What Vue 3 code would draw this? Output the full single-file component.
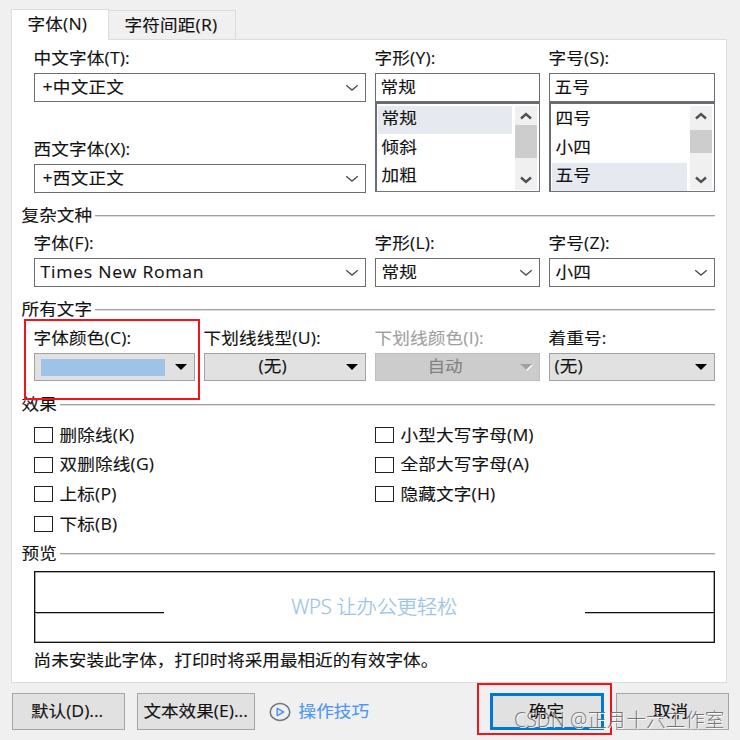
<script setup>
import { h } from 'vue'

const T = (props, { slots }) => h('span', { class: 'txt' }, slots.default())

const Chevron = () =>
  h('svg', { class: 'chev', width: 14, height: 8, viewBox: '0 0 14 8' }, [
    h('path', { d: 'M1.2 1.2 7 6.1l5.8-4.9', fill: 'none', stroke: '#505050', 'stroke-width': 1.4 })
  ])

const styles = [
  { name: '常规', on: true },
  { name: '倾斜', on: false },
  { name: '加粗', on: false }
]
const sizes = [
  { name: '四号', on: false },
  { name: '小四', on: false },
  { name: '五号', on: true }
]
const effectsLeft = ['删除线(K)', '双删除线(G)', '上标(P)', '下标(B)']
const effectsRight = ['小型大写字母(M)', '全部大写字母(A)', '隐藏文字(H)']
</script>

<template>
  <div class="dialog" lang="zh-CN">
    <nav class="tabs">
      <div class="tab active"><T>字体(N)</T></div>
      <div class="tab"><T>字符间距(R)</T></div>
    </nav>

    <main class="panel">
      <section class="fonts">
        <div class="col wide">
          <div class="field">
            <label><T>中文字体(T):</T></label>
            <div class="combo plus"><T>+中文正文</T><Chevron /></div>
          </div>
          <div class="field">
            <label><T>西文字体(X):</T></label>
            <div class="combo plus"><T>+西文正文</T><Chevron /></div>
          </div>
        </div>
        <div class="col">
          <label><T>字形(Y):</T></label>
          <div class="combo size"><T>常规</T></div>
          <div class="list">
            <ul>
              <li v-for="s in styles" :key="s.name" :class="{ on: s.on }"><T>{{ s.name }}</T></li>
            </ul>
            <div class="scroll">
              <svg width="12" height="8" viewBox="0 0 12 8"><path d="M1 6.5 6 2l5 4.5" /></svg>
              <i class="thumb first"></i>
              <svg class="down" width="12" height="8" viewBox="0 0 12 8"><path d="M1 1.5 6 6l5-4.5" /></svg>
            </div>
          </div>
        </div>
        <div class="col">
          <label><T>字号(S):</T></label>
          <div class="combo size"><T>五号</T></div>
          <div class="list">
            <ul>
              <li v-for="s in sizes" :key="s.name" :class="{ on: s.on }"><T>{{ s.name }}</T></li>
            </ul>
            <div class="scroll">
              <svg width="12" height="8" viewBox="0 0 12 8"><path d="M1 6.5 6 2l5 4.5" /></svg>
              <i class="thumb second"></i>
              <svg class="down" width="12" height="8" viewBox="0 0 12 8"><path d="M1 1.5 6 6l5-4.5" /></svg>
            </div>
          </div>
        </div>
      </section>

      <h2 class="complex"><T>复杂文种</T></h2>
      <section class="row">
        <div class="wide">
          <label><T>字体(F):</T></label>
          <div class="combo latin"><T>Times New Roman</T><Chevron /></div>
        </div>
        <div>
          <label><T>字形(L):</T></label>
          <div class="combo"><T>常规</T><Chevron /></div>
        </div>
        <div>
          <label><T>字号(Z):</T></label>
          <div class="combo"><T>小四</T><Chevron /></div>
        </div>
      </section>

      <h2><T>所有文字</T></h2>
      <section class="row">
        <div>
          <label><T>字体颜色(C):</T></label>
          <div class="drop"><span class="swatch"></span><i class="tri"></i></div>
        </div>
        <div>
          <label><T>下划线线型(U):</T></label>
          <div class="drop"><span class="mid"><T>(无)</T></span><i class="tri"></i></div>
        </div>
        <div class="disabled">
          <label><T>下划线颜色(I):</T></label>
          <div class="drop"><span class="mid"><T>自动</T></span><i class="tri"></i></div>
        </div>
        <div>
          <label><T>着重号:</T></label>
          <div class="drop"><T>(无)</T><i class="tri"></i></div>
        </div>
      </section>

      <h2 class="fx"><T>效果</T></h2>
      <section class="checks">
        <div>
          <div v-for="e in effectsLeft" :key="e" class="check"><i></i><T>{{ e }}</T></div>
        </div>
        <div>
          <div v-for="e in effectsRight" :key="e" class="check"><i></i><T>{{ e }}</T></div>
        </div>
      </section>

      <h2 class="pv"><T>预览</T></h2>
      <div class="preview">
        <i class="rule"></i>
        <span class="sample">WPS 让办公更轻松</span>
        <i class="rule"></i>
      </div>
      <p class="note"><T>尚未安装此字体，打印时将采用最相近的有效字体。</T></p>
    </main>

    <footer>
      <div class="btn b1"><T>默认(D)...</T></div>
      <div class="btn b2"><T>文本效果(E)...</T></div>
      <div class="tips">
        <svg width="22" height="20" viewBox="0 0 22 20">
          <ellipse cx="11" cy="10" rx="9.8" ry="8.4" fill="none" stroke="#6e7478" stroke-width="1.5" />
          <path d="M8.2 6.3v7.4L14.6 10z" fill="none" stroke="#4c96f5" stroke-width="1.5" stroke-linejoin="round" />
        </svg>
        <T>操作技巧</T>
      </div>
      <div class="btn ok"><T>确定</T></div>
      <div class="btn cancel"><T>取消</T></div>
    </footer>

    <div class="mark color-mark"></div>
    <div class="mark ok-mark"></div>
    <div class="watermark">CSDN @正月十六工作室</div>
  </div>
</template>

<style>
body { margin: 0; background: #f0f0f0; overflow: hidden; }
</style>

<style scoped>
.dialog {
  position: relative; box-sizing: border-box; width: 740px; height: 740px; padding: 9px 0 0 10.6px;
  background: #f0f0f0; color: #111; overflow: hidden;
  font-family: "Open Sans", "Noto Sans CJK SC", sans-serif; font-size: 17.6px; line-height: 20px;
}
.dialog * { box-sizing: border-box; }
.dialog :deep(.txt) { display: inline-block; white-space: nowrap; transform: translateY(-.7px) scaleY(.88); line-height: 20px; height: 20px; flex: none; -webkit-text-stroke: .14px currentColor; }
.tabs { display: flex; align-items: flex-end; height: 30px; }
.tab { width: 127px; height: 29px; border: 1px solid #dcdcdc; border-bottom: 0; border-left: 0; padding: 5px 0 0 16px; }
.tab.active { position: relative; width: 98px; height: 31px; margin-bottom: -1px; background: #fff; border-left: 1px solid #dcdcdc; padding-top: 5px; }
.tab, label { letter-spacing: .15px; }
.panel { width: 716px; height: 644px; border: 1px solid #dcdcdc; background: #fff; padding: 9px 11px 0; display: flex; flex-direction: column; }
.fonts { display: flex; gap: 9px; height: 145px; padding-left: 11px; flex: none; }
.col { width: 166px; }
.col.wide { width: 332px; display: flex; flex-direction: column; gap: 38px; }
.col:nth-child(2) { width: 165px; }
label { display: block; height: 24px; }
.combo { height: 29px; border: 1px solid #6c6c6c; background: #fff; display: flex; align-items: center; padding: 0 6px; }
.combo.plus { padding-left: 8px; letter-spacing: .2px; }
.combo.size { padding-left: 5px; }
.latin :deep(.txt) { letter-spacing: .72px; }
.combo :deep(.chev) { margin-left: auto; flex: none; }
.list { height: 90px; border: 1px solid #70757d; border-top: 2px solid #696c73; border-left: 2px solid #696c73; display: flex; padding: 2px 2px 1px 1px; }
ul { list-style: none; margin: 0; padding: 0; flex: 1; }
li { height: 28.5px; padding: 3px 0 0 4px; margin-right: 3px; }
li.on { background: #e6eaf0; height: 27.5px; margin-bottom: 1px; }
.scroll { width: 22px; background: #f0f0f0; display: flex; flex-direction: column; align-items: center; padding: 6px 0 6px; }
.scroll svg { flex: none; }
.scroll path { fill: none; stroke: #505050; stroke-width: 2.4; }
.thumb { width: 100%; background: #cdcdcd; }
.thumb.first { height: 33px; margin-top: 5px; }
.thumb.second { height: 23px; margin-top: 10px; }
.down { margin-top: auto; }
h2 { display: flex; align-items: center; gap: 3px; margin: 11px 0 0 -1px; height: 22px; font-size: inherit; font-weight: 400; line-height: 20px; flex: none; }
h2 :deep(.txt) { position: relative; top: .6px; }
h2::after { content: ""; flex: 1; height: 1px; background: #a0a0a0; box-shadow: 0 1px #dedede; }
h2.complex { margin-top: 10px; }
h2.fx { margin-top: 12px; }
h2.pv { margin-top: 3px; }
.row { display: grid; grid-template-columns: 161px 162px 165px 166px; column-gap: 9px; padding: 9px 0 0 11px; flex: none; }
.complex + .row { padding-top: 8px; }
.wide { grid-column: span 2; }
.drop { height: 28px; border: 1px solid #a2a2a2; background: #e1e1e1; display: flex; align-items: center; padding: 0 7px 0 5px; }
.swatch { width: 124px; height: 17px; background: #9dc3e6; margin-left: 1px; }
.tri { margin-left: auto; border: 6px solid transparent; border-top: 6px solid #000; border-bottom: 0; }
.mid { flex: 1; text-align: center; height: 20px; padding-right: 10px; }
.disabled label { color: #a0a0a0; }
.disabled .drop { background: #ccc; border-color: #bfbfbf; color: #838383; }
.disabled .tri { border-top-color: #a0a0a0; filter: drop-shadow(1px 1px 0 #fff); }
.checks { display: grid; grid-template-columns: 341px 1fr; height: 124px; padding: 5px 0 0 11px; flex: none; }
.check { display: flex; align-items: center; gap: 7px; height: 29.7px; letter-spacing: .15px; }
.check i { width: 19px; height: 16px; border: 1px solid #222; background: #fff; }
.check :deep(.txt) { position: relative; top: .7px; }
.preview { width: 681px; height: 72px; margin: 7px 0 0 11px; border: 1px solid #111; display: flex; align-items: center; justify-content: space-between; flex: none; box-shadow: inset 0 0 0 .5px #555; }
.rule { width: 129px; height: 1px; background: #111; margin-top: 11px; box-shadow: 0 1px #bbb; }
.sample { font-size: 20.4px; letter-spacing: -.3px; font-weight: 300; color: #9dc3e6; white-space: nowrap; transform: translateY(-1px) scaleY(.94); -webkit-text-stroke: .3px currentColor; }
.note { margin: 8px 0 0 11px; height: 20px; }
footer { display: flex; align-items: flex-start; padding: 10px 0 0 1px; }
.btn { height: 37px; border: 1px solid #a5a5a5; background: #e1e1e1; display: flex; align-items: center; justify-content: center; flex: none; }
.b1 { width: 113px; padding-right: 2px; }
.b2 { width: 118px; margin-left: 12px; }
.tips { width: 220px; height: 37px; margin-left: 14px; display: flex; align-items: center; gap: 8px; color: #4c96f5; }
.ok { width: 114px; border: 3px solid #0078d7; margin-left: 1px; }
.cancel { width: 113px; margin-left: 12px; padding-right: 3px; }
.mark { position: absolute; border: 2px solid #f5131b; }
.color-mark { left: 24px; top: 319px; width: 176px; height: 81px; }
.ok-mark { left: 477px; top: 683px; width: 135px; height: 52px; }
.watermark { position: absolute; left: 514px; top: 707px; font-size: 19.6px; line-height: 26px; font-weight: 300; white-space: nowrap; color: rgba(110, 110, 110, .95); text-shadow: 1px 1px 0 rgba(255, 255, 255, .9); }
</style>
